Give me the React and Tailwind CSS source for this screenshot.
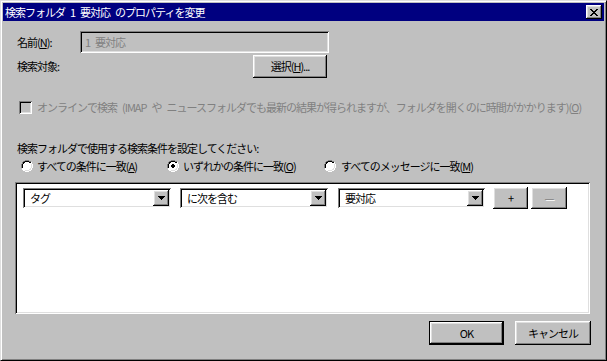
import React from "react";

const raised =
  "shadow-[inset_-1px_-1px_0_#000,inset_1px_1px_0_#fff,inset_-2px_-2px_0_#808080,inset_2px_2px_0_#dfdfdf]";
const sunken =
  "shadow-[inset_1px_1px_0_#808080,inset_-1px_-1px_0_#fff,inset_2px_2px_0_#000,inset_-2px_-2px_0_#dfdfdf]";

const Sp = () => <span className="inline-block w-[5px]" />;

function Radio({ checked }) {
  return (
    <svg width="12" height="12" viewBox="0 0 12 12" className="shrink-0">
      <path d="M4 0h4v1h2v1h1v2h1v4h-1v2h-1v1h-2v1h-4v-1h-2v-1h-1v-2h-1v-4h1v-2h1v-1h2z" fill="#fff" />
      <path d="M4 0h4v1h2v1h-2v-1h-4v1h-2v2h-1v4h-1v-4h1v-2h1v-1h2z" fill="#808080" />
      <path d="M4 1h4v1h2v1h-2v-1h-4v1h-1v1h-1v4h-1v-4h1v-2h1z" fill="#000" />
      <path d="M11 4h1v4h-1v2h-1v1h-2v1h-4v-1h4v-1h2v-2h1z" fill="#fff" />
      <path d="M10 4h1v4h-1v2h-2v1h-4v-1h4v-1h1v-1h1z" fill="#dfdfdf" />
      {checked && <path d="M5 4h2v1h1v2h-1v1h-2v-1h-1v-2h1z" fill="#000" />}
    </svg>
  );
}

function Combo({ value, width }) {
  return (
    <div className={`h-[20px] bg-white flex items-center p-[2px] ${sunken}`} style={{ width }}>
      <span className="flex-1 pl-[5px] leading-none">{value}</span>
      <div className={`w-[16px] h-[16px] bg-[#c0c0c0] flex items-center justify-center ${raised}`}>
        <svg width="7" height="4" viewBox="0 0 7 4">
          <path d="M0 0h7v1h-1v1h-1v1h-1v1h-1v-1h-1v-1h-1v-1h-1z" fill="#000" />
        </svg>
      </div>
    </div>
  );
}

function Button({ children, className = "", disabled }) {
  return (
    <div
      className={`bg-[#c0c0c0] flex items-center justify-center ${raised} ${
        disabled ? "text-[#808080] [text-shadow:1px_1px_0_#fff]" : ""
      } ${className}`}
    >
      {children}
    </div>
  );
}

export default function App() {
  return (
    <div
      className="w-[607px] h-[361px] bg-[#c0c0c0] border border-t-[#dfdfdf] border-l-[#dfdfdf] border-r-black border-b-black shadow-[inset_1px_1px_0_#fff,inset_-1px_-1px_0_#808080] p-[2px] flex flex-col text-[11px] tracking-[-1px] text-black"
      style={{ fontFamily: '"Noto Sans CJK JP", "Noto Sans", sans-serif' }}
    >
      {/* title bar */}
      <div className="h-[18px] shrink-0 bg-[#000080] flex items-center pl-[2px] pr-[2px] text-white">
        <span className="leading-none">
          検索フォルダ<Sp />1<Sp />要対応<Sp />のプロパティを変更
        </span>
        <div className={`ml-auto w-[16px] h-[14px] bg-[#c0c0c0] flex items-center justify-center ${raised}`}>
          <svg width="8" height="7" viewBox="0 0 8 7">
            <path d="M0 0h2v1h1v1h2v-1h1v-1h2v1h-1v1h-1v1h-1v1h1v1h1v1h1v1h-2v-1h-1v-1h-2v1h-1v1h-2v-1h1v-1h1v-1h1v-1h-1v-1h-1v-1h-1z" fill="#000" />
          </svg>
        </div>
      </div>

      {/* name */}
      <div className="mt-[10px] flex items-center">
        <span className="ml-[14px] w-[63px]">
          名前(<u>N</u>):
        </span>
        <div className={`w-[249px] h-[22px] flex items-center pl-[5px] text-[#808080] ${sunken}`}>
          1<Sp />要対応
        </div>
      </div>

      {/* target */}
      <div className="mt-[2px] flex items-center">
        <span className="ml-[14px] w-[236px]">検索対象:</span>
        <Button className="w-[74px] h-[23px]">
          選択(<u>H</u>)...
        </Button>
      </div>

      {/* offline */}
      <div className="mt-[23px] ml-[16px] h-[13px] flex items-center gap-[5px] text-[#808080]">
        <div className={`w-[13px] h-[13px] shrink-0 bg-[#c0c0c0] ${sunken}`} />
        <span className="leading-[13px]">
          オンラインで検索<Sp />(IMAP<Sp />や<Sp />ニュースフォルダでも最新の結果が得られますが、フォルダを開くのに時間がかかります)(<u>O</u>)
        </span>
      </div>

      {/* criteria */}
      <div className="mt-[28px] ml-[14px] h-[12px] leading-[12px]">
        検索フォルダで使用する検索条件を設定してください:
      </div>
      <div className="mt-[6px] ml-[18px] flex items-center h-[12px] leading-[12px]">
        <Radio />
        <span className="ml-[4px] w-[130px]">
          すべての条件に一致(<u>A</u>)
        </span>
        <Radio checked />
        <span className="ml-[4px] w-[141px]">
          いずれかの条件に一致(<u>O</u>)
        </span>
        <Radio />
        <span className="ml-[5px]">
          すべてのメッセージに一致(<u>M</u>)
        </span>
      </div>

      {/* rules panel */}
      <div className={`mt-[10px] ml-[12px] w-[575px] h-[132px] shrink-0 bg-white p-[2px] ${sunken}`}>
        <div className="mt-[3px] ml-[6px] flex items-center">
          <Combo value="タグ" width={148} />
          <div className="w-[9px]" />
          <Combo value="に次を含む" width={148} />
          <div className="w-[10px]" />
          <Combo value="要対応" width={147} />
          <Button className="ml-[8px] w-[35px] h-[22px]">+</Button>
          <Button className="ml-[3px] w-[36px] h-[22px]" disabled>
            —
          </Button>
        </div>
      </div>

      {/* buttons */}
      <div className="mt-[7px] mr-[13px] flex justify-end gap-[11px]">
        <div className="border border-black">
          <Button className="w-[73px] h-[22px]">OK</Button>
        </div>
        <Button className="w-[76px] h-[24px]">キャンセル</Button>
      </div>
    </div>
  );
}
